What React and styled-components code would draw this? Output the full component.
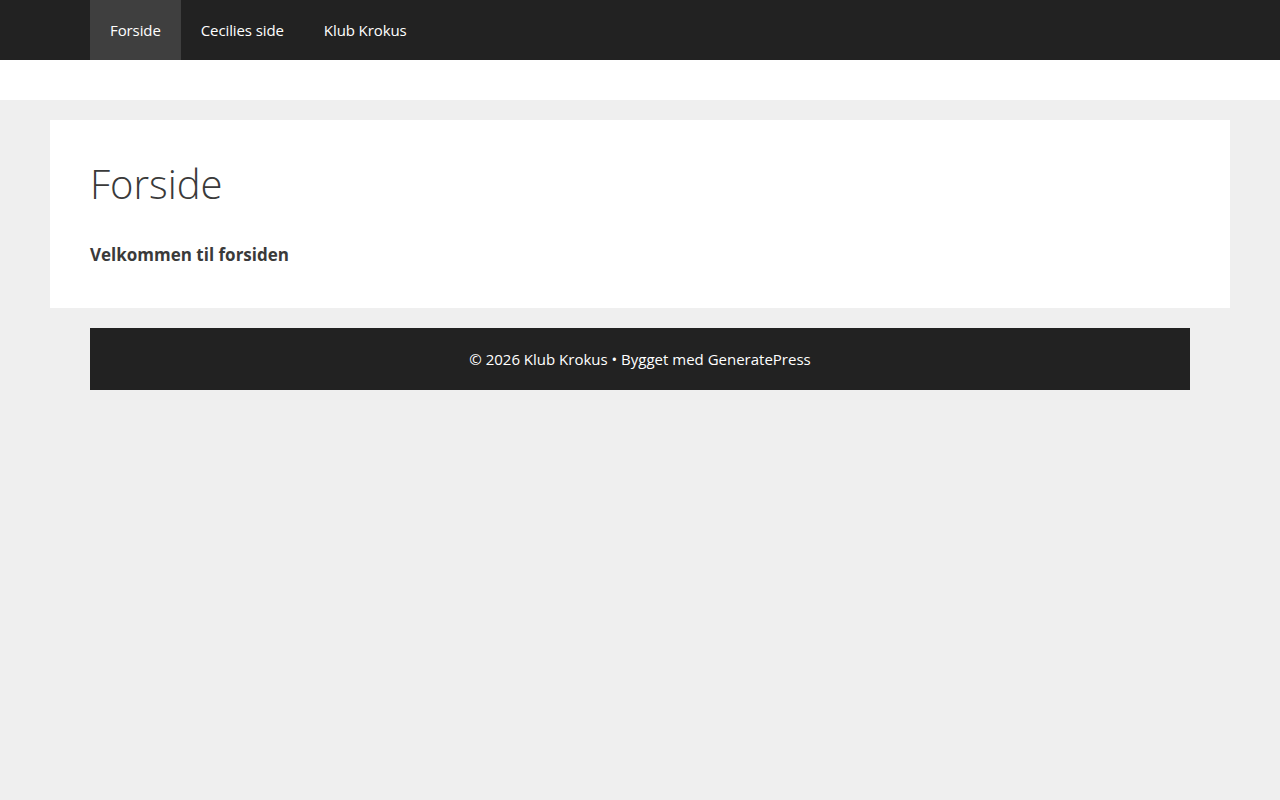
import React from "react";
import styled, { createGlobalStyle } from "styled-components";

const GlobalStyle = createGlobalStyle`
  html, body {
    margin: 0;
    padding: 0;
  }
  body {
    background: #efefef;
    font-family: "Open Sans", "Liberation Sans", sans-serif;
    font-size: 17px;
    line-height: 1.5;
    color: #3a3a3a;
  }
  * {
    box-sizing: border-box;
  }
`;

const links = [
  { label: "Forside", active: true },
  { label: "Cecilies side" },
  { label: "Klub Krokus" },
];

const App = () => {
  return (
    <>
      <GlobalStyle />
      <NavBar>
        <NavInner>
          {links.map((link) => (
            <NavItem key={link.label} href="#" $active={link.active}>
              {link.label}
            </NavItem>
          ))}
        </NavInner>
      </NavBar>
      <Header />
      <Main>
        <Article>
          <Title>Forside</Title>
          <Content>
            <p>
              <strong>Velkommen til forsiden</strong>
            </p>
          </Content>
        </Article>
      </Main>
      <Footer>
        © 2026 Klub Krokus • Bygget med <FooterLink href="#">GeneratePress</FooterLink>
      </Footer>
    </>
  );
};

export default App;

const NavBar = styled.nav`
  background: #222222;
  height: 60px;
`;

const NavInner = styled.div`
  width: 1100px;
  margin: 0 auto;
  display: flex;
  height: 100%;
`;

const NavItem = styled.a`
  display: block;
  padding: 0 20px;
  line-height: 60px;
  font-size: 15px;
  letter-spacing: -0.1px;
  color: #ffffff;
  text-decoration: none;
  background: ${(p) => (p.$active ? "#3f3f3f" : "transparent")};
`;

const Header = styled.header`
  background: #ffffff;
  height: 40px;
`;

const Main = styled.main`
  width: 1180px;
  margin: 20px auto 0;
`;

const Article = styled.article`
  background: #ffffff;
  padding: 40px;
`;

const Title = styled.h1`
  margin: 0;
  font-size: 40px;
  font-weight: 300;
  line-height: 1.2;
  color: #3a3a3a;
`;

const Content = styled.div`
  margin-top: 34px;

  p {
    margin: 0;
  }

  strong {
    font-weight: 700;
  }
`;

const Footer = styled.footer`
  width: 1100px;
  margin: 20px auto 0;
  background: #222222;
  color: #ffffff;
  padding: 20px;
  font-size: 15px;
  line-height: 1.5;
  text-align: center;
`;

const FooterLink = styled.a`
  color: #ffffff;
  text-decoration: none;
`;
